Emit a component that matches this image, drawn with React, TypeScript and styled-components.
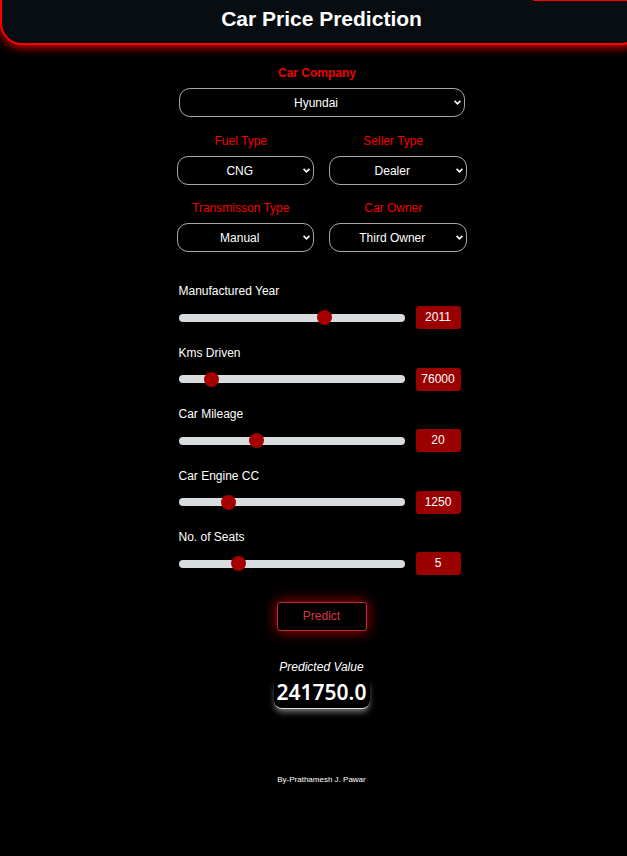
import React, { useId, useState } from "react";
import styled, { createGlobalStyle } from "styled-components";

const GlobalStyle = createGlobalStyle`
  *, *::before, *::after { box-sizing: border-box; }
  html { background: #000; }
  body {
    margin: 0;
    background: #000;
    color: #fff;
    font-family: "Liberation Sans", Arial, sans-serif;
    font-size: 12px;
    line-height: 16px;
    overflow-x: hidden;
  }
`;

const Page = styled.div`
  width: calc(100% + 16px);
  min-height: 100vh;
  display: flex;
  flex-direction: column;
  align-items: center;
`;

const Header = styled.header`
  position: relative;
  width: 100%;
  padding: 5px 0 10px;
  background: #070d11;
  border: solid #f00;
  border-width: 0 2px 2px;
  border-radius: 0 0 22px 22px;
  box-shadow: 0 3px 10px #c00;
  text-align: center;
`;

const LoadingBar = styled.span`
  position: absolute;
  top: 0;
  right: 0;
  width: 108px;
  height: 1px;
  background: #f00;
`;

const Title = styled.h1`
  margin: 0;
  font-size: 21px;
  line-height: 28px;
`;

const Form = styled.form`
  width: 290px;
  margin-top: 20px;
  display: flex;
  flex-direction: column;
  align-items: center;
`;

const CompanyRow = styled.div`
  width: 286px;
  margin-bottom: 16px;
`;

const SelectGrid = styled.div`
  width: 100%;
  display: grid;
  grid-template-columns: 1fr 1fr;
  gap: 15px;
`;

const SelectField = styled.div`
  display: flex;
  flex-direction: column;
  gap: 7px;
`;

const SelectLabel = styled.label<{ $strong?: boolean }>`
  padding-right: 9px;
  color: #f00000;
  text-align: center;
  font-weight: ${(p) => (p.$strong ? 700 : 400)};
`;

const SelectBox = styled.div`
  display: grid;
  align-items: center;

  & > * {
    grid-area: 1 / 1;
  }
`;

const Select = styled.select`
  appearance: none;
  width: 100%;
  height: 29px;
  padding: 0 11px 0 0;
  color: #fff;
  background: #000;
  border: 1px solid #a5a8ab;
  border-radius: 11px;
  font: inherit;
  text-align: center;
`;

const Chevron = styled.svg`
  justify-self: end;
  margin-right: 4px;
  pointer-events: none;
`;

const SliderList = styled.div`
  width: 286px;
  min-height: 292px;
  margin: 31px 0 27px;
  display: flex;
  flex-direction: column;
  justify-content: space-between;
`;

const SliderField = styled.div`
  display: flex;
  flex-direction: column;
  gap: 7px;
`;

const SliderRow = styled.div`
  display: flex;
  align-items: center;
  gap: 11px;
`;

const Range = styled.input`
  appearance: none;
  width: 226px;
  height: 8px;
  margin: 0;
  background: #d7dcdf;
  border-radius: 4px;
  outline: none;

  &::-webkit-slider-thumb {
    appearance: none;
    width: 15px;
    height: 15px;
    border-radius: 50%;
    background: #a50000;
  }
`;

const Badge = styled.output`
  width: 45px;
  border-radius: 3px;
  background: #9a0000;
  line-height: 23px;
  text-align: center;
`;

const PredictButton = styled.button`
  width: 90px;
  height: 29px;
  padding: 0 0 2px;
  color: #dc3545;
  background: #000;
  border: 1px solid #b82c3a;
  border-radius: 3px;
  box-shadow: 0 0 14px #c00000;
  font: inherit;
`;

const Result = styled.section`
  margin-top: 28px;
  display: flex;
  flex-direction: column;
  align-items: center;
`;

const Caption = styled.em`
  font-size: 12px;
`;

const Price = styled.output`
  width: 96px;
  margin-top: 2px;
  border-bottom: 1px solid #ddd;
  border-radius: 8px;
  background: #000;
  box-shadow: 0 4px 6px -1px #777;
  font-family: "Noto Sans", sans-serif;
  font-size: 21px;
  font-weight: 600;
  line-height: 31px;
  text-align: center;
`;

const Footer = styled.footer`
  margin-top: 63px;
  font-size: 8px;
`;

interface PickerProps {
  label: string;
  options: string[];
  initial: string;
  strong?: boolean;
}

function Picker({ label, options, initial, strong }: PickerProps) {
  const id = useId();
  return (
    <SelectField>
      <SelectLabel htmlFor={id} $strong={strong}>{label}</SelectLabel>
      <SelectBox>
        <Select id={id} defaultValue={initial}>
          {options.map((o) => <option key={o}>{o}</option>)}
        </Select>
        <Chevron width="7" height="5" viewBox="0 0 7 5" aria-hidden="true">
          <path d="M0.6 0.9 L3.5 3.8 L6.4 0.9" fill="none" stroke="#fff" strokeWidth="1.6" />
        </Chevron>
      </SelectBox>
    </SelectField>
  );
}

interface SliderProps {
  label: string;
  min: number;
  max: number;
  step?: number;
  initial: number;
}

function Slider({ label, min, max, step = 1, initial }: SliderProps) {
  const id = useId();
  const [value, setValue] = useState(initial);
  return (
    <SliderField>
      <label htmlFor={id}>{label}</label>
      <SliderRow>
        <Range
          id={id}
          type="range"
          min={min}
          max={max}
          step={step}
          value={value}
          onChange={(e) => setValue(Number(e.target.value))}
        />
        <Badge htmlFor={id}>{value}</Badge>
      </SliderRow>
    </SliderField>
  );
}

const sliders: SliderProps[] = [
  { label: "Manufactured Year", min: 1990, max: 2022, initial: 2011 },
  { label: "Kms Driven", min: 0, max: 620000, step: 1000, initial: 76000 },
  { label: "Car Mileage", min: 0, max: 60, initial: 20 },
  { label: "Car Engine CC", min: 600, max: 3850, initial: 1250 },
  { label: "No. of Seats", min: 2, max: 14, initial: 5 },
];

export default function App() {
  return (
    <>
      <GlobalStyle />
      <Page>
        <Header>
          <LoadingBar />
          <Title>Car Price Prediction</Title>
        </Header>
        <Form onSubmit={(e: React.FormEvent) => e.preventDefault()}>
          <CompanyRow>
            <Picker label="Car Company" initial="Hyundai" options={["Hyundai", "Maruti", "Honda", "Toyota"]} strong />
          </CompanyRow>
          <SelectGrid>
            <Picker label="Fuel Type" initial="CNG" options={["CNG", "Diesel", "Petrol"]} />
            <Picker label="Seller Type" initial="Dealer" options={["Dealer", "Individual"]} />
            <Picker label="Transmisson Type" initial="Manual" options={["Manual", "Automatic"]} />
            <Picker label="Car Owner" initial="Third Owner" options={["First Owner", "Second Owner", "Third Owner"]} />
          </SelectGrid>
          <SliderList>
            {sliders.map((s) => <Slider key={s.label} {...s} />)}
          </SliderList>
          <PredictButton type="submit">Predict</PredictButton>
        </Form>
        <Result>
          <Caption>Predicted Value</Caption>
          <Price>241750.0</Price>
        </Result>
        <Footer>By-Prathamesh J. Pawar</Footer>
      </Page>
    </>
  );
}
